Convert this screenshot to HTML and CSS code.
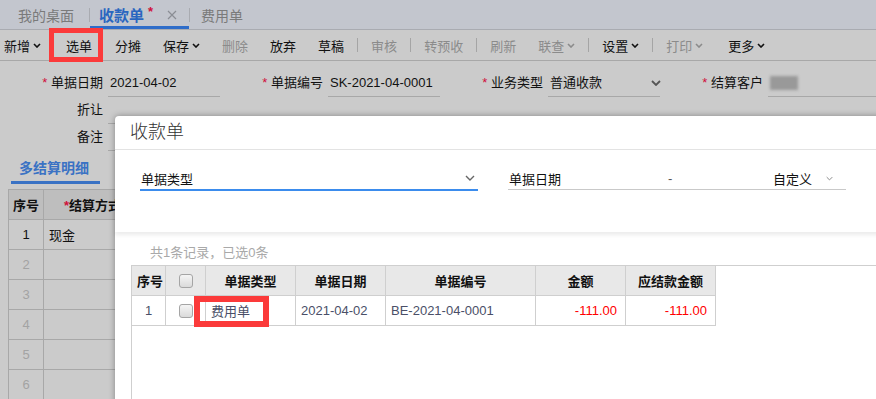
FILE: index.html
```html
<!DOCTYPE html>
<html lang="zh-CN">
<head>
    <meta charset="UTF-8">
    <title>收款单</title>
    <link rel="stylesheet" href="styles.css">
</head>
<body>
    <div class="tabbar">
        <div class="tab tab-home">我的桌面</div>
        <div class="tab-sep"></div>
        <div class="tab tab-active">收款单<span class="star">*</span>
            <svg class="tab-close" viewBox="0 0 10 10"><path d="M1 1l8 8M9 1l-8 8"/></svg>
        </div>
        <div class="tab-sep"></div>
        <div class="tab tab-plain">费用单</div>
    </div>

    <div class="toolbar">
        <div class="tool first">新增<svg class="caret" viewBox="0 0 8 5"><path d="M1 1l3 3 3-3"/></svg></div>
        <div class="tool pick">选单</div>
        <div class="tool">分摊</div>
        <div class="tool">保存<svg class="caret" viewBox="0 0 8 5"><path d="M1 1l3 3 3-3"/></svg></div>
        <div class="tool off">删除</div>
        <div class="tool">放弃</div>
        <div class="tool">草稿</div>
        <div class="tool-sep"></div>
        <div class="tool off">审核</div>
        <div class="tool-sep"></div>
        <div class="tool off">转预收</div>
        <div class="tool-sep"></div>
        <div class="tool off">刷新</div>
        <div class="tool off">联查<svg class="caret" viewBox="0 0 8 5"><path d="M1 1l3 3 3-3"/></svg></div>
        <div class="tool-sep"></div>
        <div class="tool">设置<svg class="caret" viewBox="0 0 8 5"><path d="M1 1l3 3 3-3"/></svg></div>
        <div class="tool-sep"></div>
        <div class="tool off">打印<svg class="caret" viewBox="0 0 8 5"><path d="M1 1l3 3 3-3"/></svg></div>
        <div class="tool more">更多<svg class="caret" viewBox="0 0 8 5"><path d="M1 1l3 3 3-3"/></svg></div>
    </div>

    <div class="form">
        <div class="frow">
            <div class="field">
                <div class="flabel"><span class="req">*</span> 单据日期</div>
                <div class="finput">2021-04-02</div>
            </div>
            <div class="field">
                <div class="flabel"><span class="req">*</span> 单据编号</div>
                <div class="finput">SK-2021-04-0001</div>
            </div>
            <div class="field">
                <div class="flabel"><span class="req">*</span> 业务类型</div>
                <div class="finput select">普通收款<svg class="sel-caret" viewBox="0 0 10 6"><path d="M1 1l4 4 4-4"/></svg></div>
            </div>
            <div class="field">
                <div class="flabel"><span class="req">*</span> 结算客户</div>
                <div class="finput"><span class="blurred"></span></div>
            </div>
        </div>
        <div class="frow">
            <div class="field wide">
                <div class="flabel">折让</div>
                <div class="finput"></div>
            </div>
        </div>
        <div class="frow">
            <div class="field wide">
                <div class="flabel">备注</div>
                <div class="finput"></div>
            </div>
        </div>

        <div class="subtab">多结算明细</div>

        <table class="grid">
            <colgroup><col style="width:35px"><col style="width:300px"></colgroup>
            <tr><th class="num">序号</th><th class="way"><span class="req">*</span>结算方式</th></tr>
            <tr><td class="num">1</td><td>现金</td></tr>
            <tr><td class="num dim">2</td><td></td></tr>
            <tr><td class="num dim">3</td><td></td></tr>
            <tr><td class="num dim">4</td><td></td></tr>
            <tr><td class="num dim">5</td><td></td></tr>
            <tr><td class="num dim">6</td><td></td></tr>
        </table>
    </div>

    <!-- modal -->
    <div class="dialog">
        <div class="dlg-title">收款单</div>
        <div class="filter">
            <div class="ffield active">
                <span class="ff-label">单据类型</span>
                <svg class="ff-caret" viewBox="0 0 10 6"><path d="M1 1l4 4 4-4"/></svg>
            </div>
            <div class="ffield">
                <span class="ff-label date">单据日期</span>
                <span class="ff-dash">-</span>
                <span class="ff-custom">自定义</span>
                <svg class="ff-caret small" viewBox="0 0 10 6"><path d="M1 1l4 4 4-4"/></svg>
            </div>
        </div>
        <div class="list">
            <div class="info">共1条记录，已选0条</div>
            <div class="table-wrap">
                <table class="bills">
                    <colgroup>
                        <col style="width:34px"><col style="width:40px"><col style="width:90px"><col style="width:90px">
                        <col style="width:150px"><col style="width:90px"><col style="width:90px">
                    </colgroup>
                    <tr>
                        <th>序号</th><th><span class="cb"></span></th><th>单据类型</th><th>单据日期</th>
                        <th>单据编号</th><th>金额</th><th>应结款金额</th>
                    </tr>
                    <tr>
                        <td class="c">1</td><td class="c"><span class="cb"></span></td><td>费用单</td><td>2021-04-02</td>
                        <td>BE-2021-04-0001</td><td class="amt">-111.00</td><td class="amt">-111.00</td>
                    </tr>
                </table>
            </div>
        </div>
    </div>

    <!-- red annotation boxes -->
    <div class="mark mark-pick"></div>
    <div class="mark mark-cell"></div>
</body>
</html>
```

FILE: styles.css
```css
body {
    margin: 0;
    width: 876px;
    height: 399px;
    overflow: hidden;
    position: relative;
    font-family: "Liberation Sans", "Noto Sans CJK SC", sans-serif;
    font-size: 13px;
    color: #111;
    background: #cbcbcb;
}

/* top tabs */
.tabbar {
    height: 29px;
    background: #c3c6ce;
    border-bottom: 1px solid #a9abb1;
    display: flex;
    align-items: stretch;
}

.tab {
    display: flex;
    align-items: center;
    font-size: 14px;
    color: #7a7a7a;
}

.tab-home {
    padding: 0 15px 0 18px;
}

.tab-sep {
    width: 1px;
    height: 14px;
    align-self: center;
    background: #a9abb1;
}

.tab-active {
    padding: 0 12px 0 9px;
    color: #2a66c0;
    font-size: 15px;
    font-weight: bold;
    box-shadow: inset 0 -3px 0 #2e6cc9;
}

.tab-active .star {
    color: #d0103a;
    font-size: 13px;
    margin: -6px 0 0 4px;
}

.tab-close {
    width: 10px;
    height: 10px;
    margin-left: 14px;
    fill: none;
    stroke: #8a8d94;
    stroke-width: 1.2;
}

.tab-plain {
    padding: 0 0 0 11px;
}

/* toolbar */
.toolbar {
    height: 30px;
    border-bottom: 1px solid #a8a8a8;
    display: flex;
    align-items: center;
}

.tool {
    display: flex;
    align-items: center;
    padding: 0 11px;
    color: #111;
    white-space: nowrap;
}

.tool.first {
    padding-left: 4px;
}

.tool.pick {
    margin: 0 1px 0 3px;
}

.tool.off {
    color: #8b8b8b;
}

.tool.more {
    padding-left: 14px;
}

.caret {
    width: 8px;
    height: 5px;
    margin-left: 3px;
    fill: none;
    stroke: currentColor;
    stroke-width: 1.6;
}

.tool-sep {
    width: 1px;
    height: 14px;
    margin: 0 2px;
    background: #a5a5a5;
}

/* header form */
.form {
    padding-top: 9px;
}

.frow {
    display: flex;
    height: 27px;
}

.field {
    display: flex;
    width: 220px;
    flex: 0 0 220px;
}

.field.wide {
    width: 700px;
    flex-basis: 700px;
}

.flabel {
    width: 108px;
    flex: 0 0 108px;
    padding-right: 5px;
    box-sizing: border-box;
    text-align: right;
    line-height: 26px;
}

.req {
    color: #d0103a;
}

.finput {
    flex: 1;
    height: 26px;
    line-height: 26px;
    border-bottom: 1px solid #a8a8a8;
    padding-left: 2px;
    display: flex;
    align-items: center;
}

.finput.select {
    justify-content: space-between;
}

.sel-caret {
    width: 10px;
    height: 6px;
    margin-right: -1px;
    fill: none;
    stroke: #555;
    stroke-width: 1.8;
}

.blurred {
    display: inline-block;
    width: 28px;
    height: 14px;
    background: #999;
    filter: blur(1.5px);
}

.subtab {
    width: fit-content;
    margin: 7px 0 0 11px;
    padding: 0 11px 3px 8px;
    line-height: 20px;
    font-size: 14px;
    font-weight: bold;
    color: #3a72c4;
    border-bottom: 3px solid #3a72c4;
}

.grid {
    margin: 5px 0 0 8px;
    border-collapse: collapse;
    table-layout: fixed;
    width: 335px;
}

.grid th,
.grid td {
    border: 1px solid #a8a8a8;
    height: 29px;
    padding: 0 5px;
    white-space: nowrap;
}

.grid th {
    background: #bebebe;
    font-weight: bold;
}

.grid .num {
    text-align: center;
    padding: 0;
}

.grid th.way {
    text-align: left;
    padding-left: 20px;
}

.grid .dim {
    color: #a3a3a3;
}

/* modal dialog */
.dialog {
    position: absolute;
    left: 115px;
    top: 116px;
    width: 790px;
    height: 300px;
    background: #fff;
    border-radius: 4px 0 0 0;
    box-shadow: 0 0 6px rgba(0, 0, 0, 0.35);
}

.dlg-title {
    height: 33px;
    line-height: 33px;
    padding-left: 15px;
    border-bottom: 1px solid #e3e3e3;
    font-size: 18px;
    font-weight: 300;
    color: #333;
}

.filter {
    height: 82px;
    box-sizing: border-box;
    padding: 17px 0 0 25px;
    display: flex;
    gap: 30px;
    box-shadow: 0 3px 4px rgba(0, 0, 0, 0.08);
    position: relative;
}

.ffield {
    width: 338px;
    height: 22px;
    border-bottom: 1px solid #c9c9c9;
    display: flex;
    align-items: center;
}

.ffield.active {
    border-bottom: 2px solid #3b8ced;
    justify-content: space-between;
}

.ff-label {
    padding-left: 1px;
}

.ff-label.date {
    width: 159px;
}

.ff-dash {
    flex: 1;
    color: #555;
}

.ff-caret {
    width: 10px;
    height: 6px;
    margin-right: 3px;
    fill: none;
    stroke: #666;
    stroke-width: 1.4;
}

.ff-caret.small {
    width: 7px;
    height: 5px;
    margin: 0 13px 0 14px;
    stroke: #888;
}

.list {
    padding-top: 12px;
}

.info {
    margin-left: 35px;
    line-height: 18px;
    color: #a9a9a9;
}

.table-wrap {
    margin: 3px 0 0 16px;
    height: 200px;
    border-top: 1px solid #cfcfcf;
    border-left: 1px solid #cfcfcf;
}

.bills {
    border-collapse: collapse;
    table-layout: fixed;
    width: 585px;
    margin: -1px 0 0 -1px;
}

.bills th,
.bills td {
    border: 1px solid #cfcfcf;
    height: 29px;
    padding: 0 5px;
    white-space: nowrap;
}

.bills th {
    background: #e8e8e8;
    font-weight: bold;
    color: #111;
    text-align: center;
}

.bills td {
    color: #4a4f68;
}

.bills td.c {
    text-align: center;
}

.bills td.amt {
    text-align: right;
    padding-right: 8px;
    color: #f00;
}

.cb {
    display: inline-block;
    width: 12px;
    height: 12px;
    border: 1px solid #a5a5a5;
    border-radius: 3px;
    background: linear-gradient(#f5f5f5, #dadada);
    vertical-align: middle;
}

/* red annotation boxes */
.mark {
    position: absolute;
    box-sizing: border-box;
    border: 5px solid #fb3a3a;
}

.mark-pick {
    left: 49px;
    top: 28px;
    width: 54px;
    height: 34px;
}

.mark-cell {
    left: 194px;
    top: 296px;
    width: 75px;
    height: 31px;
    border-width: 6px;
}
```
